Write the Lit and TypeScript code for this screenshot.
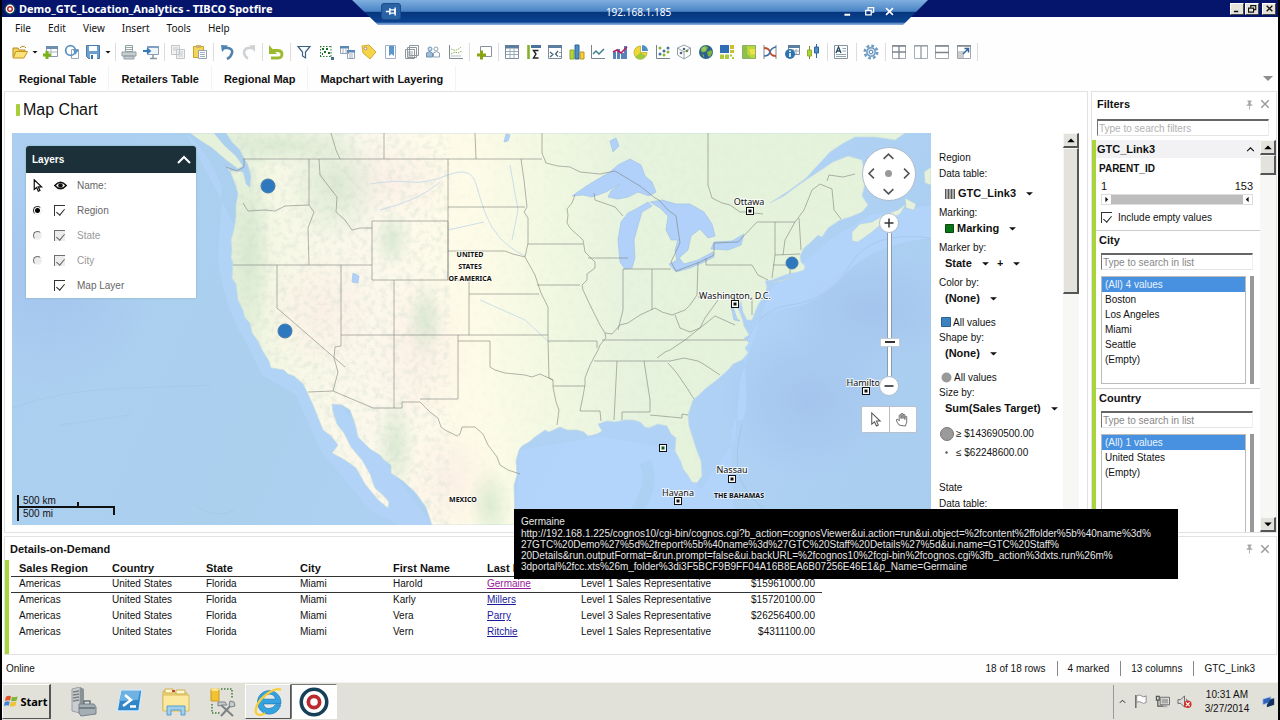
import { LitElement, html, svg, css } from "lit";
import { customElement, state } from "lit/decorators.js";

const icons: Record<string, unknown> = {
  folder: svg`<path d="M1 13V4h5l1 2h6v2" fill="#f3d25c" stroke="#b98a1c"/><path d="M1 14L4 7.500h11.500L12 14z" fill="#fbe27a" stroke="#c8921c"/><path d="M8 4q3-3.500 6 0" fill="none" stroke="#b98a1c"/>`,
  addTable: svg`<path d="M4.500 2.500h11v10h-11z" fill="#fff" stroke="#8b9aa8"/><path d="M4 2h12v3H4z" fill="#6d8fae"/><path d="M9 5v7M5 8h10" stroke="#a9b5c0"/><path d="M5 7v8M1 11h8" stroke="#7ab317" stroke-width="3"/>`,
  refresh: svg`<path d="M7.500 5.500h7v9h-7z" fill="#fff" stroke="#9aa9b6"/><circle cx="6.500" cy="6.500" r="4.800" fill="none" stroke="#5f93c2" stroke-width="1.800"/><path d="M9 5l6 1-4 5z" fill="#5f93c2"/>`,
  save: svg`<path d="M1.500 1.500h13v13h-11l-2-2z" fill="#6ea0cd" stroke="#4a7cab"/><path d="M4 2h8v5H4zM5 10h7v5H5z" fill="#fff"/><path d="M6 11h2v4H6z" fill="#3c6f9f"/>`,
  print: svg`<path d="M4.500 1.500h7v6h-7z" fill="#fff" stroke="#8f9ea4"/><path d="M1 8h14v4H1zM3 12h10v3H3z" fill="#c6ced0" stroke="#8f9ea4"/><path d="M5 3.500h6M5 5.500h6" stroke="#9aa"/>`,
  present: svg`<path d="M4.500 2.500h11v8h-11z" fill="#eef4fa" stroke="#8aa0b5"/><path d="M4 2h12v2H4z" fill="#7f9fc0"/><path d="M0 7h6M4 4.500L7 7 4 9.500" stroke="#3878b5" stroke-width="1.800" fill="none"/><path d="M10 11v3M7 14.500h7" stroke="#8996a2" stroke-width="1.500"/>`,
  copy: svg`<path d="M1.500 1.500h8v9h-8zM6.500 5.500h8v9h-8z" fill="#f2f2f2" stroke="#c2c5c7"/><path d="M3 4h5M3 6h3M8 8h5M8 10h5M8 12h5" stroke="#c4c7c9"/>`,
  paste: svg`<path d="M1.500 2.500h10v11h-10z" fill="#f4d758" stroke="#c9a227"/><path d="M4 1h5v3H4z" fill="#c8b46c"/><path d="M6.500 6.500h8v8h-8z" fill="#fff" stroke="#95a2ad"/><path d="M8 8.500h5M8 10.500h5M8 12.500h5" stroke="#9fb0bf"/>`,
  undo: svg`<path d="M4 4h5q5 1 4 5-1 4-5 6" fill="none" stroke="#4f83ad" stroke-width="2.600"/><path d="M2 1l7 .5L3 8z" fill="#4f83ad"/>`,
  redo: svg`<path d="M12 4H7Q3 5 3 9q1 4 4 5.500" fill="none" stroke="#cfd2d4" stroke-width="2.600"/><path d="M14 1v7L8 1.500z" fill="#cfd2d4"/>`,
  revert: svg`<path d="M5 6.500h5q4 .5 4 3.500 0 4-4 4H3" fill="none" stroke="#9cba2e" stroke-width="2.800"/><path d="M1 1v9h8z" fill="#9cba2e"/>`,
  filter: svg`<path d="M2 2.500h12L9.500 8v6l-3-2V8z" fill="#f7fbff" stroke="#3d5f80" stroke-width="1.200"/>`,
  marking: svg`<path d="M2 2.500h11M2 12.500h11M2.500 2v11M13 2v11" stroke="#2a7a35" stroke-dasharray="1.500 1.500"/><path d="M4 4h2v2H4zM8 4h2v2H8zM6 7h2v2H6zM10 8h2v2h-2zM4 9h1v2H4z" fill="#1d6d28"/><path d="M13 13h3v3h-3z" fill="#456f9a"/>`,
  details: svg`<path d="M1.500 2.500h8v7h-8zM8.500 6.500h7v8h-7z" fill="#fff" stroke="#8da3b8"/><path d="M1 2h9v2.500H1zM8 6h8v2.500H8z" fill="#5a88b5"/><path d="M4 5v4M7 5v4M11 9v5M13 9v5" stroke="#aab"/>`,
  tag: svg`<path d="M1 2l7-1 7 7-6 7-7-6z" fill="#f6d447" stroke="#d3aa3a"/><circle cx="4.500" cy="4.500" r="1.300" fill="#fff" stroke="#a88"/>`,
  bookmark: svg`<path d="M3.500 1.500h10v13h-10z" fill="#fff" stroke="#9eb1c4"/><path d="M7 2h5v10l-2.500-2L7 12z" fill="#5b97cc"/>`,
  pages: svg`<path d="M5.500 1.500h9v10h-9zM3.500 3.500h9v10h-9zM1.500 5.500h9v9h-9z" fill="#fff" stroke="#8f969c"/><path d="M3 8h6M3 10h6M3 12h6" stroke="#9aa1a8"/>`,
  people: svg`<circle cx="5" cy="5" r="2" fill="#cfe0ef" stroke="#6f93b4"/><path d="M1.500 13V9q3-3 6 0v4z" fill="#9cbcd8" stroke="#6f93b4"/><circle cx="11" cy="5" r="2" fill="#fff" stroke="#8aa3ba"/><path d="M8.500 13V9q3-3 6 0v4z" fill="#fff" stroke="#8aa3ba"/>`,
  lines: svg`<path d="M2.500 1v13.500H16" fill="none" stroke="#7e8a94"/><path d="M4 5q5 3 10-2M4 10l4-2 3 1 4-2" fill="none" stroke="#8aa84b" stroke-dasharray="1.500 1"/><path d="M4 12h10" stroke="#b7c0c8"/>`,
  addPage: svg`<path d="M4.500 2.500h11v10h-11z" fill="#fff" stroke="#8794a0"/><path d="M5.500 6.500v9M1 11h9" stroke="#86a510" stroke-width="3"/>`,
  table: svg`<path d="M1.500 1.500h13v13h-13z" fill="#fff" stroke="#7d8d9c"/><path d="M1 1h14v3.500H1z" fill="#5d7f9f"/><path d="M2 7.500h12M2 10.500h12M6 5v9M10 5v9" stroke="#9aa9b6"/>`,
  cross: svg`<path d="M2.500 1v14" stroke="#84b22b" stroke-width="2.600"/><path d="M5 1h10v3H5z" fill="#47729d"/><path d="M12.500 6.500H7.500L10 10l-2.500 4h5" fill="none" stroke="#222" stroke-width="1.400"/>`,
  graph: svg`<path d="M1.500 1.500h13v13h-13z" fill="#fff" stroke="#7d8d9c"/><path d="M1 1h14v3H1z" fill="#5d7f9f"/><path d="M3 8l3 2.500L3 13M11 7l-2.500 3L11 12.500M13 8v1M13 12v1" fill="none" stroke="#44606e" stroke-width="1.200"/>`,
  bars: svg`<path d="M1 6h4v9H1z" fill="#b6d433" stroke="#8fae2a"/><path d="M6 1h4v14H6z" fill="#4e8ec7" stroke="#2e6496"/><path d="M11 8h4v7h-4z" fill="#f5d03a" stroke="#b79420"/>`,
  line: svg`<path d="M1.500 1v13.500H15" fill="none" stroke="#76828c"/><path d="M3 10l3-3 3 3 5-5" fill="none" stroke="#3f7e8c" stroke-width="1.500"/>`,
  combo: svg`<path d="M1 8h3v7H1zM5 5h3v10H5zM9 9h3v6H9zM12 2h3v13h-3z" fill="#5684ba"/><path d="M1 8l4-2 4 3 6-6" fill="none" stroke="#b81d62" stroke-width="1.600"/>`,
  pie: svg`<path d="M7.500 8.500V2a6.500 6.500 0 1 0 6.500 6.500z" fill="#efd735" stroke="#c9b93a"/><path d="M7.500 8.500L2 13a6.500 6.500 0 0 0 11 -1z" fill="#9fca3c"/><path d="M9 7V1a6 6 0 0 1 6 6z" fill="#4f8ec4"/>`,
  scatter: svg`<path d="M1.500 1v13.500H15" fill="none" stroke="#76828c"/><g fill="#8fb52b"><circle cx="5" cy="4" r="1.500"/><circle cx="9" cy="11" r="1.500"/><circle cx="13" cy="8" r="1.500"/></g><g fill="#44729e"><circle cx="5" cy="10" r="1.500"/><circle cx="9" cy="7" r="1.500"/><circle cx="13" cy="4" r="1.500"/></g>`,
  cube: svg`<path d="M8 1l6.500 3v7L8 15l-6.500-4V4zM1.500 4L8 8l6.500-4M8 8v7" fill="#fff" stroke="#95a0a8"/><circle cx="5" cy="9" r="1.300" fill="#567"/><circle cx="11" cy="7" r="1.300" fill="#6a8a4a"/><circle cx="8" cy="5" r="1.300" fill="#567"/>`,
  globe: svg`<circle cx="8" cy="8" r="7" fill="#2c6292"/><path d="M3 4l4-2.500 3 2-2 4-3 1-2-1zM9 8l4-2 1.500 2L12 13l-2-1zM4 10l2 1v3z" fill="#7db53c"/><circle cx="6" cy="5" r="2" fill="#b8e3a0" opacity=".5"/>`,
  tree: svg`<path d="M1 1h9v8H1z" fill="#2f6db4"/><path d="M11 1h4v4h-4zM11 6h4v3h-4z" fill="#c9c02f"/><path d="M1 10.500h4V15H1zM6 10.500h4V15H6zM11 10.500h2v2h-2zM13 13h2v2h-2z" fill="#a9c93a"/>`,
  heat: svg`<path d="M1.500 1.500h13v13h-13z" fill="#b9d83c" stroke="#8bb06a"/><path d="M2 2h4v8l4 4H2z" fill="#8fc04a"/><path d="M8 5h6v5l-4 1z" fill="#f1e04a"/>`,
  parallel: svg`<path d="M2 1v14M14 1v14" stroke="#7b8791"/><path d="M2 4q5 0 6 4t6 4" fill="none" stroke="#c0502c" stroke-width="1.800"/><path d="M2 12q5 0 6-4t6-5" fill="none" stroke="#3c6fa6" stroke-width="1.500"/>`,
  info: svg`<path d="M4.500 1.500h11v9h-11z" fill="#fff" stroke="#7d8d9c"/><path d="M4 1h12v3H4z" fill="#5d7f9f"/><path d="M9 5v5M12 5v5M6 7h9" stroke="#9aa9b6"/><circle cx="6" cy="10" r="5" fill="#2f74b0"/><path d="M6 9v4M6 6.500v1.500" stroke="#fff" stroke-width="1.600"/>`,
  box: svg`<path d="M4.500 2v13" stroke="#7a8a1c"/><path d="M2.500 6h4v6h-4z" fill="#b3d236" stroke="#8fae2a"/><path d="M11.500 0v14" stroke="#2e6496"/><path d="M9.500 3h4v6h-4z" fill="#4e8ec7" stroke="#2e6496"/>`,
  text: svg`<path d="M1.500 1.500h13v13h-13z" fill="#fff" stroke="#8794a0"/><path d="M3 9l2.500-6L8 9M4 7h3" fill="none" stroke="#274a63" stroke-width="1.300"/><path d="M9.500 4.500H13M9.500 7H13M3 10.500h10M3 12.500h10" stroke="#8fa4b2"/>`,
  gear: svg`<circle cx="8" cy="8" r="6.200" fill="none" stroke="#6f9bc2" stroke-width="2.600" stroke-dasharray="2.700 2.100"/><circle cx="8" cy="8" r="4.200" fill="#d9e6f2" stroke="#6f9bc2" stroke-width="1.500"/><circle cx="8" cy="8" r="1.800" fill="#fff" stroke="#5787b3"/>`,
  grid4: svg`<path d="M1.500 1.500h13v13h-13z" fill="#fff" stroke="#a1a7ac"/><path d="M1 2h14M1 8h14M8 2v13" stroke="#7c848b" stroke-width="1.300"/>`,
  grid2v: svg`<path d="M1.500 1.500h13v13h-13z" fill="#fff" stroke="#a7adb2"/><path d="M1 2h14M8 2v13" stroke="#8a9299" stroke-width="1.200"/>`,
  grid2h: svg`<path d="M1.500 1.500h13v13h-13z" fill="#fff" stroke="#a1a7ac"/><path d="M1 2h14M1 8.500h14" stroke="#7c848b" stroke-width="1.300"/>`,
  maxi: svg`<path d="M1.500 1.500h13v13h-13z" fill="#fff" stroke="#a1a7ac"/><path d="M2 7h6v7H2z" fill="#c9cdd0"/><path d="M1 2h14" stroke="#7c848b" stroke-width="1.500"/><path d="M7 10l5-5M8.500 4.500h4v4" fill="none" stroke="#2f6796" stroke-width="1.500"/>`,
  spotfire: svg`<circle cx="8" cy="8" r="6.800" fill="#fff" stroke="#163f58" stroke-width="1.900"/><circle cx="8" cy="8" r="3" fill="#fff" stroke="#b92b2e" stroke-width="2"/>`,
  pin: svg`<path d="M5.500 3h5v1.500h-1V8h2v1.500h-7V8h2V4.500h-1zM7.500 9.500h1V14h-1z" fill="#a5a5a5"/>`,
  close: svg`<path d="M3 3l10 10M13 3L3 13" stroke="#9a9a9a" stroke-width="1.900"/>`,
  server: svg`<path d="M3 2l8-2v26l-8-2z" fill="#c9cdcf" stroke="#9aa0a4"/><path d="M11 0l4 2v22l-4 2z" fill="#8b9296"/><path d="M4 5l6-1M4 8l6-1M4 11l6-1M4 14l6-1" stroke="#7a8287" stroke-width="1.500"/><path d="M10 17h15l2 3v7l-15 2-2-3z" fill="#a3aeb5" stroke="#76828a"/><path d="M15 17v-3h6v3M10 21h16" fill="none" stroke="#65717a" stroke-width="1.500"/>`,
  shell: svg`<path d="M6 3h21l-3 21H2z" fill="#2f86c8" stroke="#d4e8f7" stroke-width="1.500"/><path d="M7 4h18l-2 9-19 1z" fill="#6db2e2"/><path d="M10 8l6 5-8 6M15 19.500h6" fill="none" stroke="#fff" stroke-width="2.500"/>`,
  explorer: svg`<path d="M2 4h9l2 2h13v17H2z" fill="#f4d779" stroke="#d3b452"/><path d="M4 2h8v4H4zM15 3h9v4h-9z" fill="#fff7cf" stroke="#cfb04e"/><path d="M11 3h3v2h-3z" fill="#c43"/><path d="M2 8h26v16H2z" fill="#fbe9a0" stroke="#dabb5c"/><path d="M6 28v-9h18v9h-4v-5H10v5z" fill="#9fd0ef" stroke="#5a9cc9"/>`,
  tools: svg`<path d="M4 2h8v12H4z" fill="#f2c230" stroke="#c79c22"/><ellipse cx="8" cy="2.500" rx="4" ry="1.500" fill="#fbe58c"/><path d="M14 2h11v10M5 17v9h9" fill="none" stroke="#3f7a3f" stroke-width="1.500" stroke-dasharray="1.500 1.500"/><path d="M13 17l13 12M25 17L14 29" stroke="#7c8386" stroke-width="2"/><path d="M11 15h7l2 3h-5l-4 1zM23 14l4 1 1 4-4 1-2-2z" fill="#c4ccd1" stroke="#7c8386"/>`,
  ie: svg`<path d="M24 19h5.500A12.500 12.500 0 1 1 29.700 15v3H11q1 5 6 5 4 0 7-4zM11 13h13q-1-5-6-5.500-6 .5-7 5.500z" fill="#35a3e0" stroke="#1b78b8" stroke-width=".8"/><path d="M30 3Q24 0 13 9T3 27q2 5 10 1" fill="none" stroke="#f6cf3b" stroke-width="2.500"/>`,
  windows: svg`<path d="M2 3q3-2 5.500-.5L6.500 7Q4 6 1 7.500z" fill="#e2542b"/><path d="M8.500 3q3 1 6-.5L13.500 7q-3 1.500-6 .4z" fill="#7db634"/><path d="M.8 8.500Q3.500 7 6.200 8.200L5 12.500q-2.500-1-5 .5z" fill="#3f86d2"/><path d="M7.300 8.500q3 1 6-.4l-1.200 4.500q-3 1.500-6 .4z" fill="#f1c232"/>`,
  flag: svg`<path d="M3 1v14" stroke="#666" stroke-width="1.500"/><path d="M4 2q3-2 5 0t5 0v7q-3 2-5 0t-5 0z" fill="#fff" stroke="#888"/>`,
  net: svg`<path d="M5.500 3.500h10v8h-10z" fill="#e6e6e6" stroke="#666"/><path d="M7 5h7v5H7zM9 12h4v2H9z" fill="#aaa"/><path d="M1.500 2.500h3v4h-3zM3 7v6h6" fill="none" stroke="#555" stroke-width="1.300"/>`,
  vol: svg`<path d="M1 6h3l4-4v12l-4-4H1z" fill="#ddd" stroke="#666"/><path d="M10 5q2 3 0 6" fill="none" stroke="#666"/><circle cx="11.500" cy="11" r="4" fill="#d3302b"/><path d="M9.500 9l4 4M13.500 9l-4 4" stroke="#fff" stroke-width="1.300"/>`,
  desktop: svg`<path d="M1 5l10-3v7L1 12z" fill="#2f62b8" stroke="#b9cdea"/><path d="M11 5l4-1v8l-9 3v-3z" fill="#16315f"/>`,
  cursor: svg`<path d="M4 1v12l3-2.500 2 4.500 2-1-2-4.300h4z" fill="#fff" stroke="#555" stroke-width="1.100"/>`,
  arrow: svg`<path d="M4 1v12l3-2.500 2 4.500 2-1-2-4.300h4z" fill="#fff" stroke="#111" stroke-width="1.500"/>`,
  hand: svg`<path d="M4.500 14Q1 10 1.500 8q1.500-1 3 1.500V3.500q1-1.500 2 0V7 2q1-1.500 2 0v5-4q1-1.500 2 0v5-3q1-1 2 0v6l-1.500 4z" fill="#fff" stroke="#666"/>`,
  eye: svg`<path d="M1 8q7-8 14 0-7 8-14 0z" fill="#fff" stroke="#111" stroke-width="2"/><circle cx="8" cy="8" r="2.800" fill="#111"/>`,
  up: svg`<path d="M2 11l6-6 6 6" fill="none" stroke="currentColor" stroke-width="2"/>`,
  tri: svg`<path d="M3 6h10l-5 5z" fill="currentColor"/>`,
  triUp: svg`<path d="M3 11h10L8 6z" fill="currentColor"/>`,
  plus: svg`<path d="M8 2v12M2 8h12" stroke="#333" stroke-width="2"/>`,
  minus: svg`<path d="M2 8h12" stroke="#333" stroke-width="2.200"/>`,
  wmin: svg`<path d="M3 12h7" stroke="currentColor" stroke-width="2.400"/>`,
  wrest: svg`<path d="M6 6V2.500h8v6.500h-3" fill="none" stroke="currentColor" stroke-width="1.800"/><path d="M2.500 6.500h8V13h-8z" fill="none" stroke="currentColor" stroke-width="1.800"/>`,
  wclose: svg`<path d="M3 3l10 10M13 3L3 13" stroke="currentColor" stroke-width="2.400"/>`,
  rpin: svg`<path d="M1 8h5M6 4v8M6 6h6v4H6M12.500 3v10" fill="none" stroke="#fff" stroke-width="1.800"/>`,
};

const ic = (name: string, size = 16, box = 16) =>
  html`<svg width=${size} height=${size} viewBox="0 0 ${box} ${box}" aria-hidden="true">${icons[name]}</svg>`;

const toolbar: [string, string[]][] = [
  ["", ["folder", "^", "addTable", "refresh", "save", "^"]],
  ["", ["print", "present"]],
  ["", ["copy", "paste"]],
  ["", ["undo", "redo"]],
  ["", ["revert"]],
  ["wide", ["filter", "marking", "details", "tag", "bookmark", "pages", "people", "lines"]],
  ["", ["addPage"]],
  ["", ["table", "cross", "graph", "bars", "line", "combo", "pie", "scatter", "cube", "globe", "tree", "heat", "parallel", "info", "box"]],
  ["wide", ["text"]],
  ["", ["gear"]],
  ["", ["grid4", "grid2v", "grid2h", "maxi"]],
];

const land =
  "M226 133L232 142 240 150 244 158 248 165 251 176 250 188 246 184 243 172 236 171 229 171 228 166 232 176 236 186 238 194 236 205 236 217 234 230 231 240 232 250 231 257 233 264 232 278 236 284 237 292 238 300 243 310 245 318 250 323 252 333 258 341 262 350 269 361 271 368 278 369 284 370 288 374 294 376 303 384 307 392 313 405 319 420 323 430 331 436 338 445 332 453 345 460 356 468 365 484 378 500 388 508 389 502 384 496 375 488 370 474 362 460 351 447 344 433 337 424 333 412 332 404 342 405 350 410 355 424 358 437 370 449 380 455 384 460 391 465 391 473 403 481 415 492 426 507 432 525 515 525 514 485 517 475 516 461 519 450 522 446 529 442 535 437 545 430 549 432 560 427 567 430 577 430 584 432 588 436 597 434 602 431 598 424 607 421 615 422 625 420 633 420 640 422 645 427 649 428 658 424 667 426 671 434 676 438 675 451 681 462 683 469 687 474 692 482 697 483 702 476 701 461 697 451 695 445 689 426 688 415 693 400 700 394 705 389 718 379 728 370 733 364 742 360 748 353 745 348 749 343 744 338 749 335 744 326 742 318 738 308 741 301 743 312 747 320 752 320 755 312 758 305 765 294 767 287 765 281 772 280 785 275 792 273 798 272 804 270 805 266 801 262 800 256 804 248 810 243 818 235 822 237 828 228 840 220 850 217 862 212 868 205 862 196 866 180 862 160 848 156 833 162 818 172 800 184 784 196 770 203 790 190 806 178 818 165 830 152 842 144 855 137 875 137 895 140 905 133Z";

const borders = [
  "M243 159H542M542 133V153L546 163 558 166 570 167 580 172 600 174 615 171 625 177 640 186 655 198 659 200 668 210 676 216 680 243 671 262 676 271 700 262 714 255V243L738 242 757 222H795L804 210 812 190 820 184 832 189 834 210 841 219M708 133V185L712 198 722 203 730 205 740 212 745 212 763 214M827 181L829 175 843 177 855 174",
  "M384 133V159M475 133L476 159M331 133L336 150 340 159M226 167L237 171 244 167 244 159",
  "M309 159V205L314 212 308 228 309 265M243 203L248 211 265 210 275 211 285 206 309 205M233 265H372M319 159L320 175 330 188 337 197 336 212 345 220 352 230 360 228 372 228M372 221H448V280H372zM448 159V221M448 207H525M448 251H505L513 254 525 257",
  "M521 159L524 180 527 207 524 212 528 218 528 243 525 257 535 275 541 293 548 307V340L549 378 553 380V387L556 402 559 410 557 425M528 244H583M537 285H580M469 294H539M448 280H469V335M448 221V280",
  "M575 195L572 203 567 209 568 215 567 223 570 228 583 240 585 252 595 262 595 268 587 274 587 280 582 285 583 290 590 305 600 325 605 333 606 338 600 345 598 350 590 365 585 378 585 385 583 396 580 411 600 411 601 421M588 258H628M623 269V310L618 330M594 193L595 200 615 207 623 216",
  "M277 265V308L345 367M341 265V346L335 347 334 358 338 372 333 391M394 280V408M341 335H548M458 335V341H490V367L495 370 505 373 515 374 525 375 532 377 540 374 553 380M458 341V399H420M308 392L333 391 373 408H402V402H420L430 412 438 418 441 427 445 430 457 436 460 434 462 427H475L483 434 488 445 497 457 500 465 508 470 520 474",
  "M548 341H597V348M553 386H585M602 340H746M594 361H670M617 361L614 420M644 361L650 400V412H622V420M650 415L682 418V414L688 415M668 363L676 372 685 385 694 399M670 361L684 358 698 361 705 365 720 375M657 358L665 352 670 350 685 340",
  "M605 333L612 334 620 325 628 323 640 315 655 308 662 312 672 315 685 310 690 305 697 295 698 262M652 269V310M623 269H671M706 258V265H752L758 275 768 280M698 297H735M752 297V315M675 315L680 328 690 332 700 328 705 318 718 300M685 340L700 328 715 316 735 325",
  "M775 222V255L772 278M795 222L785 240 783 255M799 218L801 250M775 255L800 254M773 265H795M790 265V274",
];

const places: [string, number, number, number, number][] = [
  ["Ottawa", 749, 205, 750, 211],
  ["Washington, D.C.", 735, 299, 735, 304],
  ["Hamilton", 866, 386, 866, 391],
  ["Nassau", 732, 473, 732, 479],
  ["Havana", 678, 496, 678, 501],
  ["", 0, 0, 663, 448],
];
const countries: [string, number, number][] = [
  ["UNITED", 470, 257], ["STATES", 470, 269], ["OF AMERICA", 470, 281], ["MEXICO", 463, 502], ["THE BAHAMAS", 739, 498],
];

const layers = [
  { name: "Region", radio: true, on: true, off: false },
  { name: "State", radio: true, on: false, off: true },
  { name: "City", radio: true, on: false, off: true },
  { name: "Map Layer", radio: false, on: false, off: false },
];

const people = [
  ["Harold", "Germaine", "Level 1 Sales Representative", "$15961000.00"],
  ["Karly", "Millers", "Level 1 Sales Representative", "$15720100.00"],
  ["Vera", "Parry", "Level 3 Sales Representative", "$26256400.00"],
  ["Vern", "Ritchie", "Level 1 Sales Representative", "$4311100.00"],
];

const urlLines = [
  "http://192.168.1.225/cognos10/cgi-bin/cognos.cgi?b_action=cognosViewer&ui.action=run&ui.object=%2fcontent%2ffolder%5b%40name%3d%",
  "27GTC%20Demo%27%5d%2freport%5b%40name%3d%27GTC%20Staff%20Details%27%5d&ui.name=GTC%20Staff%",
  "20Details&run.outputFormat=&run.prompt=false&ui.backURL=%2fcognos10%2fcgi-bin%2fcognos.cgi%3fb_action%3dxts.run%26m%",
  "3dportal%2fcc.xts%26m_folder%3di3F5BCF9B9FF04A16B8EA6B07256E46E1&p_Name=Germaine",
];

@customElement("app-root")
export class AppRoot extends LitElement {
  @state() private selected: Record<string, number> = { City: 0, Country: 0 };

  static styles = css`
    :host { display: block; font: 10px/15px "Liberation Sans", Arial, sans-serif; color: #111; }
    * { box-sizing: border-box; }
    button, input, select { font: inherit; color: inherit; margin: 0; padding: 0; border: 0; background: none; border-radius: 0; outline: none; }
    button { display: inline-flex; align-items: center; justify-content: center; flex: none; }
    svg { display: block; flex: none; }
    h1, h2, h3, ul, p { margin: 0; padding: 0; list-style: none; }
    .app { height: 100vh; min-height: 600px; display: flex; flex-direction: column; position: relative; background: #fefefe; border: solid #000; border-width: 0 2px; overflow: hidden; }
    .title { height: 17px; flex: none; background: #04156b; color: #fff; display: flex; align-items: center; gap: 3px; padding: 0 2px; font: bold 11px/17px "Noto Sans", sans-serif; }
    .title h1 { font: inherit; flex: 1; }
    .title button { width: 14px; height: 12px; background: #e6e3da; color: #111; border: 1px solid; border-color: #fff #444 #444 #fff; }
    .title .pair { display: flex; gap: 1px; }
    .rdp { position: absolute; top: 0; left: 50%; transform: translateX(-50%); width: 576px; height: 25px; clip-path: polygon(0 0, 100% 0, 551px 100%, 26px 100%); background: linear-gradient(#7fafdf, #4a84c6 45%, #06367e 50%, #0b4391 88%, #7ea7d8 96%); color: #fff; display: flex; align-items: center; padding: 0 33px 2px 29px; font: 10px/22px "Noto Sans", sans-serif; }
    .rdp span { flex: 1; text-align: center; padding-left: 34px; }
    .rdp .rpin { width: 20px; height: 17px; border: 1px solid #1d4c8c; border-radius: 3px; background: #2a62a6; }
    .rdp .wins { display: flex; gap: 9px; }
    .menu { height: 23px; flex: none; display: flex; align-items: center; gap: 17px; padding-left: 13px; font: 10px/15px "Noto Sans", sans-serif; }
    .toolbar { height: 24px; flex: none; display: flex; align-items: center; padding-left: 7px; }
    .group { display: flex; }
    .group button { width: 22px; height: 20px; }
    .group button:nth-of-type(even) { width: 21px; }
    .group button.drop { width: 8px; }
    .sep { width: 6px; height: 18px; flex: none; display: flex; justify-content: center; }
    .sep::before { content: ""; width: 1px; background: #dcdcdc; }
    .wide { width: 8px; }
    .tabs { height: 27px; flex: none; display: flex; align-items: center; padding: 0 2px 0 5px; }
    .tabs button { height: 24px; padding: 3px 12px 0; font: bold 11px/16px "Liberation Sans", sans-serif; border-right: 1px solid #f3f3f3; }
    .tabs .more { margin-left: auto; padding: 0; border: 0; color: #8e8e8e; }
    .main { flex: 1; min-height: 0; display: flex; gap: 3px; padding: 0 1px 0 2px; }
    .panel { background: #fff; border: 1px solid #e2e2e4; display: flex; flex-direction: column; min-width: 0; min-height: 0; }
    .chart { flex: 1; padding: 0 8px 7px 7px; }
    .chart h2 { height: 41px; flex: none; display: flex; align-items: center; gap: 3px; padding: 0 0 6px 4px; font: 16px/20px "Liberation Sans", sans-serif; }
    .chart h2::before { content: ""; width: 4px; height: 12px; border-radius: 1px; background: #a8cf38; }
    .chartbody { flex: 1; display: flex; min-height: 0; }
    .map { flex: 1; position: relative; overflow: hidden; background: #a9cfec; min-width: 0; }
    .map > svg { width: 100%; height: 100%; }
    .map text { font-family: "Noto Sans", sans-serif; font-size: 9px; text-anchor: middle; fill: #111; stroke: #fff; stroke-width: 2px; stroke-opacity: .8; paint-order: stroke; }
    .map text.country { font: bold 7px "Noto Sans", sans-serif; stroke-opacity: .5; }
    .layers { position: absolute; left: 14px; top: 13px; width: 170px; background: #fff; box-shadow: 0 0 2px #7aa; border-radius: 3px 3px 0 0; color: #666; }
    .layers h3 { height: 27px; background: #1b3038; color: #fff; border-radius: 3px 3px 0 0; font: bold 10px/27px "Liberation Sans", sans-serif; display: flex; justify-content: space-between; align-items: center; padding: 0 4px 0 6px; }
    .layer { display: grid; grid-template-columns: 12px 12px 1fr; column-gap: 11px; align-items: center; height: 25px; padding-left: 5px; }
    .layer.off { color: #999; }
    input[type="radio"] { appearance: none; width: 9px; height: 9px; border-radius: 50%; border: 1px solid #eee; border-top-color: #333; border-left-color: #333; justify-self: center; }
    input[type="radio"]:checked { background: radial-gradient(circle, #000 0 2px, #fff 3px); }
    input[type="checkbox"] { appearance: none; width: 11px; height: 11px; border: solid #333; border-width: 1px 0 0 1px; background: #fff; display: grid; place-items: center; flex: none; }
    input[type="checkbox"]:checked::before { content: ""; width: 4px; height: 7px; border: solid #222; border-width: 0 1px 1px 0; transform: rotate(40deg); }
    input:disabled { background-color: #e4e4e4; opacity: .7; }
    .nav { position: absolute; right: 14px; top: 14px; width: 56px; display: flex; flex-direction: column; align-items: center; }
    .pan { width: 54px; height: 54px; border-radius: 50%; background: #fff; border: 1px solid #aebccb; display: grid; grid-template: repeat(3, 1fr) / repeat(3, 1fr); place-items: center; color: #555; margin-bottom: 12px; }
    .pan .n { grid-area: 1 / 2; } .pan .w { grid-area: 2 / 1; transform: rotate(-90deg); } .pan .e { grid-area: 2 / 3; transform: rotate(90deg); } .pan .s { grid-area: 3 / 2; transform: rotate(180deg); }
    .pan i { grid-area: 2 / 2; width: 7px; height: 7px; border-radius: 50%; background: #999; }
    .round { width: 20px; height: 20px; border-radius: 50%; background: #fff; border: 1px solid #b3bfcc; }
    .zoom { appearance: none; writing-mode: vertical-lr; direction: rtl; width: 20px; height: 143px; }
    .zoom::-webkit-slider-runnable-track { width: 5px; margin: 0 auto; background: #fff; border: solid #8a9bb0; border-width: 0 1px; }
    .zoom::-webkit-slider-thumb { appearance: none; width: 20px; height: 9px; margin-left: -8px; background: linear-gradient(#333, #333) center / 10px 2px no-repeat #fff; border: 1px solid #c4cdd6; }
    .mode { display: flex; width: 56px; height: 27px; margin-top: 10px; background: #fff; border: 1px solid #b9c2cc; border-radius: 2px; }
    .mode button { flex: 1; }
    .mode button + button { border-left: 1px solid #bbb; }
    .scale { position: absolute; left: 5px; bottom: 4px; border-left: 2px solid #111; line-height: 12px; padding-right: 1px; }
    .scale span { display: block; padding-left: 4px; height: 13px; }
    .scale .km { border-bottom: 2px solid #111; width: 96px; position: relative; }
    .scale .km::before, .scale .km::after { content: ""; position: absolute; width: 2px; background: #111; }
    .scale .km::before { left: 58px; bottom: 0; height: 4px; }
    .scale .km::after { right: 0; top: 12px; height: 8px; }
    .legend { width: 132px; padding: 17px 0 0 8px; overflow: hidden; flex: none; white-space: nowrap; }
    .lab { height: 16px; line-height: 16px; }
    .val { height: 15px; display: flex; align-items: center; gap: 3px; padding-left: 6px; font-weight: bold; font-size: 11px; }
    .val select { appearance: none; color: #111; field-sizing: content; margin-right: 5px; }
    .pairrow { display: flex; }
    .key { height: 16px; display: flex; align-items: center; gap: 2px; padding-left: 2px; }
    .size { height: 19px; display: flex; align-items: center; gap: 2px; }
    .size span { width: 15px; display: flex; justify-content: center; }
    .m4 { margin-top: 4px; } .m8 { margin-top: 8px; } .m18 { margin-top: 18px; }
    .sb { width: 16px; flex: none; display: flex; flex-direction: column; background: #f7f7f5; }
    .sb button, .sb .thumb { width: 100%; height: 15px; background: #e4e2dc; border: 1px solid; border-color: #f6f6f4 #555 #555 #f6f6f4; border-width: 1px 2px 2px 1px; color: #000; }
    .sb .thumb { height: 146px; }
    .sb .thumb.short { height: 20px; }
    .sb button:last-child { margin-top: auto; }
    .filters { width: 186px; flex: none; }
    .head { display: flex; align-items: center; height: 24px; padding: 0 3px 0 5px; font: bold 11px/16px "Liberation Sans", sans-serif; flex: none; }
    .head h2 { font: inherit; flex: 1; }
    .head button { width: 16px; }
    .field { display: block; width: 100%; height: 17px; border: solid #555; border-width: 2px 1px 1px 1px; border-color: #666 #eee #e4e4e4 #777; padding: 0 0 0 1px; }
    .field::placeholder { color: #888; opacity: 1; }
    .top { padding: 3px 7px 4px 5px; flex: none; }
    .top .field::placeholder { color: #b0b0b0; }
    .fbody { flex: 1; display: flex; min-height: 0; border-left: 4px solid #a9d53a; overflow: hidden; }
    .flist { flex: 1; display: flex; flex-direction: column; min-height: 0; overflow: hidden; }
    .gh { height: 18px; flex: none; display: flex; justify-content: space-between; align-items: center; background: #f2f2f4; padding: 0 5px 0 1px; font: bold 11px/18px "Liberation Sans", sans-serif; }
    .fs { padding: 0 7px 0 5px; border-bottom: 1px solid #ccc; flex: none; }
    .fs h3 { font: bold 11px/18px "Liberation Sans", sans-serif; height: 22px; margin-left: -2px; }
    .fs h3.id { font-size: 10px; height: 20px; padding-top: 2px; }
    .ends { display: flex; justify-content: space-between; line-height: 16px; font-size: 11px; }
    .range { height: 11px; display: flex; justify-content: space-between; background: #bdbdbd; border: 1px solid #ddd; }
    .range button { width: 9px; height: 9px; background: #fff; }
    .range .l { transform: rotate(90deg); } .range .r { transform: rotate(-90deg); }
    .inc { display: flex; align-items: center; gap: 6px; height: 25px; }
    .lb { display: flex; gap: 4px; margin-top: 6px; height: 108px; margin-bottom: 4px; }
    .lb::after { content: ""; width: 4px; background: #999; margin-right: -1px; }
    .lb ul { flex: 1; border: 1px solid #bbb; }
    .lb li { height: 15px; line-height: 15px; padding-left: 3px; }
    .lb li.sel { background: #4791e0; color: #eaf4ff; }
    .dod { height: 119px; margin: 3px 1px 0 2px; flex: none; }
    .dod .drow { flex: 1; border-left: 4px solid #a9d53a; padding: 0 0 0 2px; display: flex; align-items: flex-start; }
    .dod .head { height: 23px; }
    table { border-collapse: collapse; table-layout: fixed; width: 811px; white-space: nowrap; }
    .c3 { width: 93px; } .c4 { width: 94px; } .cj { width: 168px; }
    th { font-size: 11px; text-align: left; height: 16px; line-height: 14px; padding: 0 0 0 8px; }
    td { height: 16px; line-height: 14px; padding: 0 0 0 8px; }
    tr.first td { border-top: 1px solid #333; border-bottom: 1px solid #333; }
    th.num, td.num { text-align: right; padding-right: 7px; }
    a { color: #1a1a9c; } a.seen { color: #9a1a9c; }
    .status { height: 27px; flex: none; display: flex; align-items: center; padding: 0 23px 0 4px; gap: 11px; }
    .status span:first-child { flex: 1; }
    .status span + span + span { border-left: 1px solid #888; padding-left: 10px; }
    .task { height: 38px; flex: none; background: #e1e0d9; border-top: 1px solid #f2f2ee; display: flex; align-items: center; }
    .start { width: 49px; height: 35px; border: 1px solid; border-color: #fff #555 #555 #fff; border-right-width: 2px; font: bold 11px/16px "Noto Sans", sans-serif; color: #000; gap: 1px; }
    .apps { display: flex; align-items: center; flex: 1; padding-left: 10px; }
    .apps button { width: 46px; height: 35px; }
    .apps .task-on { border: 1px solid; border-color: #fff #555 #555 #fff; background: #e8e8e6; }
    .apps .active { border: 1px solid; border-color: #777 #fff #fff #777; background: #fff; }
    .tray { display: flex; align-items: center; gap: 7px; padding: 0 3px 0 5px; height: 34px; border-left: 1px solid #999; }
    .clock { width: 56px; text-align: center; line-height: 14px; }
    .tip { position: absolute; left: 512px; top: 509px; width: 664px; background: #000; color: #e6e6e6; padding: 7px; height: 70px; line-height: 11px; white-space: nowrap; }
    .tip h3 { font: inherit; margin-bottom: 1px; }
  `;

  private dd(name: string, lead: unknown = "") {
    return html`<label class="val">${lead}<select aria-label=${name}><option>${name}</option></select>${ic("tri", 11)}</label>`;
  }

  private scrollbar(short = false) {
    return html`<div class="sb"><button aria-label="Scroll up">${ic("triUp", 12)}</button><div class="thumb ${short ? "short" : ""}"></div><button aria-label="Scroll down">${ic("tri", 12)}</button></div>`;
  }

  private listFilter(name: string, items: string[]) {
    return html`<section class="fs"><h3>${name}</h3>
      <input class="field" type="text" aria-label="Search ${name}" placeholder="Type to search in list" />
      <div class="lb"><ul role="listbox" aria-label=${name}>${items.map((t, i) => html`<li role="option" aria-selected=${i === this.selected[name]} class=${i === this.selected[name] ? "sel" : ""} @click=${() => (this.selected = { ...this.selected, [name]: i })}>${t}</li>`)}</ul></div>
    </section>`;
  }

  private mapArt() {
    return html`<svg viewBox="12 133 919 392" preserveAspectRatio="xMinYMin slice" role="img" aria-label="Map of North America">
      <defs>
        <linearGradient id="land" gradientUnits="userSpaceOnUse" x1="225" x2="700" y1="250" y2="230">
          <stop offset="0" stop-color="#e4f1da"/><stop offset=".12" stop-color="#f7f8e6"/><stop offset=".3" stop-color="#fcf8ec"/><stop offset=".52" stop-color="#fefce8"/><stop offset=".68" stop-color="#f2f8e2"/><stop offset=".85" stop-color="#e6f3de"/><stop offset="1" stop-color="#e6f3dc"/>
        </linearGradient>
        <linearGradient id="sea" gradientUnits="userSpaceOnUse" x1="12" x2="931" y1="133" y2="525">
          <stop offset="0" stop-color="#accff1"/><stop offset=".35" stop-color="#abd0ee"/><stop offset=".7" stop-color="#b0d2f6"/><stop offset="1" stop-color="#a8cdee"/>
        </linearGradient>
        <radialGradient id="warm"><stop offset="0" stop-color="#fcefe6" stop-opacity=".9"/><stop offset="1" stop-color="#fcefe6" stop-opacity="0"/></radialGradient>
        <radialGradient id="leaf"><stop offset="0" stop-color="#cfe4ca" stop-opacity=".7"/><stop offset="1" stop-color="#cfe4ca" stop-opacity="0"/></radialGradient>
        <radialGradient id="deep"><stop offset="0" stop-color="#a2c1ec" stop-opacity=".8"/><stop offset="1" stop-color="#a2c1ec" stop-opacity="0"/></radialGradient>
        <filter id="relief" x="0" y="0" width="100%" height="100%"><feTurbulence type="fractalNoise" baseFrequency=".16" numOctaves="4" seed="8"/><feColorMatrix values="0 0 0 0 .6  0 0 0 0 .7  0 0 0 0 .62  0 1.800 0 0 -.8"/></filter>
        <clipPath id="landclip"><path d=${land}/></clipPath>
      </defs>
      <rect x="12" y="133" width="919" height="392" fill="url(#sea)"/>
      <ellipse cx="50" cy="270" rx="110" ry="120" fill="url(#deep)"/>
      <path d="M186 133Q215 160 222 190L218 260Q225 310 245 340L262 375 296 395 320 450 370 510 400 525 432 525 300 350z" fill="#b4d4fa" opacity=".7"/>
      <ellipse cx="810" cy="400" rx="90" ry="80" fill="url(#deep)"/><ellipse cx="870" cy="310" rx="90" ry="60" fill="url(#deep)"/>
      <path d="M515 525L520 450 600 436 675 450 700 490 735 440 740 380 770 290 830 240 870 215 931 205V238Q870 245 845 275T780 310 745 370 738 420 735 525z" fill="#b4d4fc" opacity=".75"/>
      <path d="M742 360Q750 310 790 305T850 265 931 238" fill="none" stroke="#9dc0df" opacity=".5"/>
      <path d="M625 525Q658 490 645 462" fill="none" stroke="#9fcbe0" stroke-width="12" opacity=".3"/>
      <path d="M742 425Q735 450 738 470T765 510" fill="none" stroke="#92b9d6" opacity=".4"/>
      <path d="M12 408Q60 390 130 388T210 385M60 425L130 415M195 505Q215 520 235 510" fill="none" stroke="#9fc4e2" opacity=".45"/>
      <path d=${land} fill="url(#land)" stroke="#c6dce2" stroke-width=".8"/>
      <g clip-path="url(#landclip)">
        <ellipse cx="320" cy="310" rx="60" ry="60" fill="url(#warm)"/><ellipse cx="420" cy="350" rx="50" ry="80" fill="url(#warm)"/><ellipse cx="390" cy="180" rx="70" ry="40" fill="url(#warm)"/><ellipse cx="450" cy="480" rx="50" ry="60" fill="url(#warm)"/>
        <ellipse cx="335" cy="185" rx="50" ry="60" fill="url(#leaf)"/><ellipse cx="250" cy="250" rx="22" ry="100" fill="url(#leaf)"/><ellipse cx="425" cy="320" rx="20" ry="40" fill="url(#leaf)"/><ellipse cx="392" cy="240" rx="20" ry="30" fill="url(#leaf)"/><ellipse cx="280" cy="145" rx="80" ry="22" fill="url(#leaf)"/><ellipse cx="395" cy="445" rx="22" ry="50" fill="url(#leaf)"/><ellipse cx="490" cy="505" rx="22" ry="40" fill="url(#leaf)"/>
        <rect x="190" y="133" width="260" height="392" filter="url(#relief)" opacity=".55"/><rect x="450" y="133" width="430" height="392" filter="url(#relief)" opacity=".12"/>
      </g>
      <g fill="#e6f1dc" stroke="#b9d3df" stroke-width=".7">
        <path d="M190 133H214L224 145 236 156 243 166 238 169 226 160 212 148 198 139z"/>
        <path d="M852 232L860 224 872 222 884 215 898 210 906 204 900 214 884 222 872 232 858 242 852 241zM905 198L916 204 914 210 906 208zM770 283L794 277 782 281zM897 186l8-3 2 5-8 2zM924 172l7-5v18l-6-2z"/>
      </g>
      <g fill="#b1d1fa" stroke="#a3c4e2" stroke-width=".7">
        <path d="M572 196L585 187 598 179 610 172 618 165 630 159 641 165 645 176 652 182 656 192 649 196 638 192 628 197 618 199 608 197 611 191 620 184 606 192 592 197 583 195z"/>
        <path d="M648 202L636 209 628 213 621 222 618 240 620 262 625 269 632 268 635 258 634 240 639 222 642 212 652 206z"/>
        <path d="M650 202L662 200 676 204 690 204 704 212 712 224 715 236 708 238 700 229 691 236 688 250 681 256 677 262 675 250 678 240 671 240 666 230 668 216 660 208z"/>
        <path d="M669 264L680 259 684 264 698 260 713 252 714 257 702 263 690 268 676 272z"/>
        <path d="M711 249L714 242 732 241 744 234 741 245 728 250z"/>
        <path d="M506 134l4 1-2 6-4 1zM610 141l6-3 3 8-6 6zM353 273l6 3-1 7-6-1zM731 306l2 1 4 12 3 2-6-1z"/>
      </g>
      <path d="M370 184Q395 180 410 182T448 175 476 184 486 215 500 238 525 256M448 230L484 222M550 343L525 320 480 300M380 210Q420 200 440 182M510 165L518 210 512 240" fill="none" stroke="#c6daea" stroke-width=".9"/>
      ${borders.map((d) => svg`<path d=${d} fill="none" stroke="#7d817c" stroke-opacity=".65" stroke-width=".9" stroke-linejoin="round"/>`)}
      ${places.map(([t, x, y, mx, my]) => svg`<text x=${x} y=${y}>${t}</text><rect x=${mx - 3.5} y=${my - 3.5} width="7" height="7" fill="#fff" stroke="#111"/><rect x=${mx - 1.5} y=${my - 1.5} width="3" height="3" fill=${t ? "#111" : "#0a5a1a"}/>`)}
      ${countries.map(([t, x, y]) => svg`<text class="country" x=${x} y=${y}>${t}</text>`)}
      ${[[268, 186], [285, 331], [792, 263]].map(([x, y]) => svg`<circle cx=${x} cy=${y} r=${y === 263 ? 6 : 7} fill="#2d78be" stroke="#4a7ba8"/>`)}
    </svg>`;
  }

  render() {
    return html`<div class="app">
      <header class="title">${ic("spotfire", 12)}<h1>Demo_GTC_Location_Analytics - TIBCO Spotfire</h1>
        <div class="pair"><button aria-label="Minimize">${ic("wmin", 10)}</button><button aria-label="Restore">${ic("wrest", 10)}</button></div>
        <button aria-label="Close">${ic("wclose", 9)}</button>
      </header>
      <nav class="menu">${["File", "Edit", "View", "Insert", "Tools", "Help"].map((m) => html`<button>${m}</button>`)}</nav>
      <div class="toolbar" role="toolbar">${toolbar.map(([cls, names]) => html`<div class="group">${names.map((n) => n === "^" ? html`<button class="drop" aria-label="More">${ic("tri", 8)}</button>` : html`<button aria-label=${n}>${ic(n)}</button>`)}</div><div class="sep ${cls}"></div>`)}</div>
      <div class="tabs" role="tablist">${["Regional Table", "Retailers Table", "Regional Map", "Mapchart with Layering"].map((t, i) => html`<button role="tab" aria-selected=${i === 3}>${t}</button>`)}<button class="more" aria-label="More tabs">${ic("tri", 16)}</button></div>

      <main class="main">
        <section class="panel chart"><h2>Map Chart</h2>
          <div class="chartbody">
            <div class="map">${this.mapArt()}
              <div class="layers"><h3>Layers<button aria-label="Collapse">${ic("up")}</button></h3>
                <div class="layer">${ic("arrow", 13)}${ic("eye", 13)}<span>Name:</span></div>
                ${layers.map((l) => html`<div class="layer ${l.off ? "off" : ""}">${l.radio ? html`<input type="radio" name="layer" aria-label=${l.name} ?checked=${l.on} ?disabled=${l.off} />` : html`<i></i>`}<input type="checkbox" id=${l.name} checked ?disabled=${l.off} /><label for=${l.name}>${l.name}</label></div>`)}
              </div>
              <div class="nav">
                <div class="pan">${["n", "w", "e", "s"].map((d) => html`<button class=${d} aria-label="Pan ${d}">${ic("up", 13)}</button>`)}<i></i></div>
                <button class="round" aria-label="Zoom in">${ic("plus", 12)}</button>
                <input class="zoom" type="range" aria-label="Zoom" min="0" max="100" value="22" />
                <button class="round" aria-label="Zoom out">${ic("minus", 12)}</button>
                <div class="mode"><button aria-label="Select">${ic("cursor", 15)}</button><button aria-label="Drag">${ic("hand", 15)}</button></div>
              </div>
              <div class="scale"><span class="km">500 km</span><span>500 mi</span></div>
            </div>
            <div class="legend">
              <div class="lab">Region</div><div class="lab">Data table:</div>
              <div class="m4">${this.dd("GTC_Link3", html`<svg width="10" height="10"><path d="M0 0h10v10H0z" fill="#aaa"/><path d="M3.500 0v10M6.500 0v10M.5 0v10M9.500 0v10" stroke="#555"/></svg>`)}</div>
              <div class="lab m4">Marking:</div>${this.dd("Marking", html`<svg width="9" height="9"><path d="M.5 .5h8v8h-8z" fill="#0a7514" stroke="#064a0c"/></svg>`)}
              <div class="lab m4">Marker by:</div><div class="pairrow">${this.dd("State")}${this.dd("+")}</div>
              <div class="lab m4">Color by:</div>${this.dd("(None)")}
              <div class="key m8"><svg width="10" height="10"><path d="M.5 .5h9v9h-9z" fill="#3c83c0" stroke="#2b6494"/></svg>All values</div>
              <div class="lab">Shape by:</div>${this.dd("(None)")}
              <div class="key m8"><svg width="11" height="11"><circle cx="5.500" cy="5.500" r="5" fill="#999"/></svg>All values</div>
              <div class="lab">Size by:</div>${this.dd("Sum(Sales Target)")}
              <div class="size m8"><span><svg width="14" height="14"><circle cx="7" cy="7" r="6.500" fill="#9a9a9a" stroke="#777"/></svg></span>≥ $143690500.00</div>
              <div class="size"><span><svg width="3" height="3"><circle cx="1.500" cy="1.500" r="1.200" fill="#555"/></svg></span>≤ $62248600.00</div>
              <div class="lab m18">State</div><div class="lab">Data table:</div>
            </div>
            ${this.scrollbar()}
          </div>
        </section>

        <aside class="panel filters">
          <div class="head"><h2>Filters</h2><button aria-label="Pin">${ic("pin", 13)}</button><button aria-label="Close filters">${ic("close", 12)}</button></div>
          <div class="top"><input class="field" type="text" aria-label="Search filters" placeholder="Type to search filters" /></div>
          <div class="fbody"><div class="flist">
            <div class="gh">GTC_Link3${ic("up", 9)}</div>
            <section class="fs"><h3 class="id">PARENT_ID</h3><div class="ends"><span>1</span><span>153</span></div>
              <div class="range"><button class="r" aria-label="Minimum">${ic("tri", 9)}</button><button class="l" aria-label="Maximum">${ic("tri", 9)}</button></div>
              <label class="inc"><input type="checkbox" checked />Include empty values</label></section>
            ${this.listFilter("City", ["(All) 4 values", "Boston", "Los Angeles", "Miami", "Seattle", "(Empty)"])}
            ${this.listFilter("Country", ["(All) 1 values", "United States", "(Empty)"])}
          </div>${this.scrollbar(true)}</div>
        </aside>
      </main>

      <section class="panel dod">
        <div class="head"><h2>Details-on-Demand</h2><button aria-label="Pin">${ic("pin", 13)}</button><button aria-label="Close details">${ic("close", 12)}</button></div>
        <div class="drow"><table>
          <colgroup><col class="c3" /><col class="c4" /><col class="c4" /><col class="c3" /><col class="c4" /><col class="c4" /><col class="cj" /><col /></colgroup>
          <thead><tr>${["Sales Region", "Country", "State", "City", "First Name", "Last Name", "", ""].map((h) => html`<th>${h}</th>`)}</tr></thead>
          <tbody>${people.map(([f, l, t, n], i) => html`<tr class=${i ? "" : "first"}><td>Americas</td><td>United States</td><td>Florida</td><td>Miami</td><td>${f}</td><td><a href="#" class=${i ? "" : "seen"}>${l}</a></td><td>${t}</td><td class="num">${n}</td></tr>`)}</tbody>
        </table></div>
      </section>

      <footer class="status"><span>Online</span><span>18 of 18 rows</span><span>4 marked</span><span>13 columns</span><span>GTC_Link3</span></footer>
      <div class="task">
        <button class="start">${ic("windows", 15)}Start</button>
        <div class="apps">
          ${["server", "shell", "explorer", "tools"].map((n) => html`<button aria-label=${n}>${ic(n, 30, 30)}</button>`)}
          <button class="task-on" aria-label="Browser">${ic("ie", 30, 32)}</button>
          <button class="active" aria-label="Spotfire">${ic("spotfire", 30)}</button>
        </div>
        <div class="tray">${ic("up", 7)}${ic("flag", 15)}${ic("net", 15)}${ic("vol", 15)}<div class="clock"><div>10:31 AM</div><div>3/27/2014</div></div>${ic("desktop", 13)}</div>
      </div>

      <div class="rdp"><button class="rpin" aria-label="Pin bar">${ic("rpin", 13)}</button><span>192.168.1.185</span>
        <div class="wins"><button aria-label="Minimize session">${ic("wmin", 13)}</button><button aria-label="Restore session">${ic("wrest", 11)}</button><button aria-label="Close session">${ic("wclose", 11)}</button></div></div>
      <div class="tip" role="tooltip"><h3>Germaine</h3>${urlLines.map((l) => html`<div>${l}</div>`)}</div>
    </div>`;
  }
}
